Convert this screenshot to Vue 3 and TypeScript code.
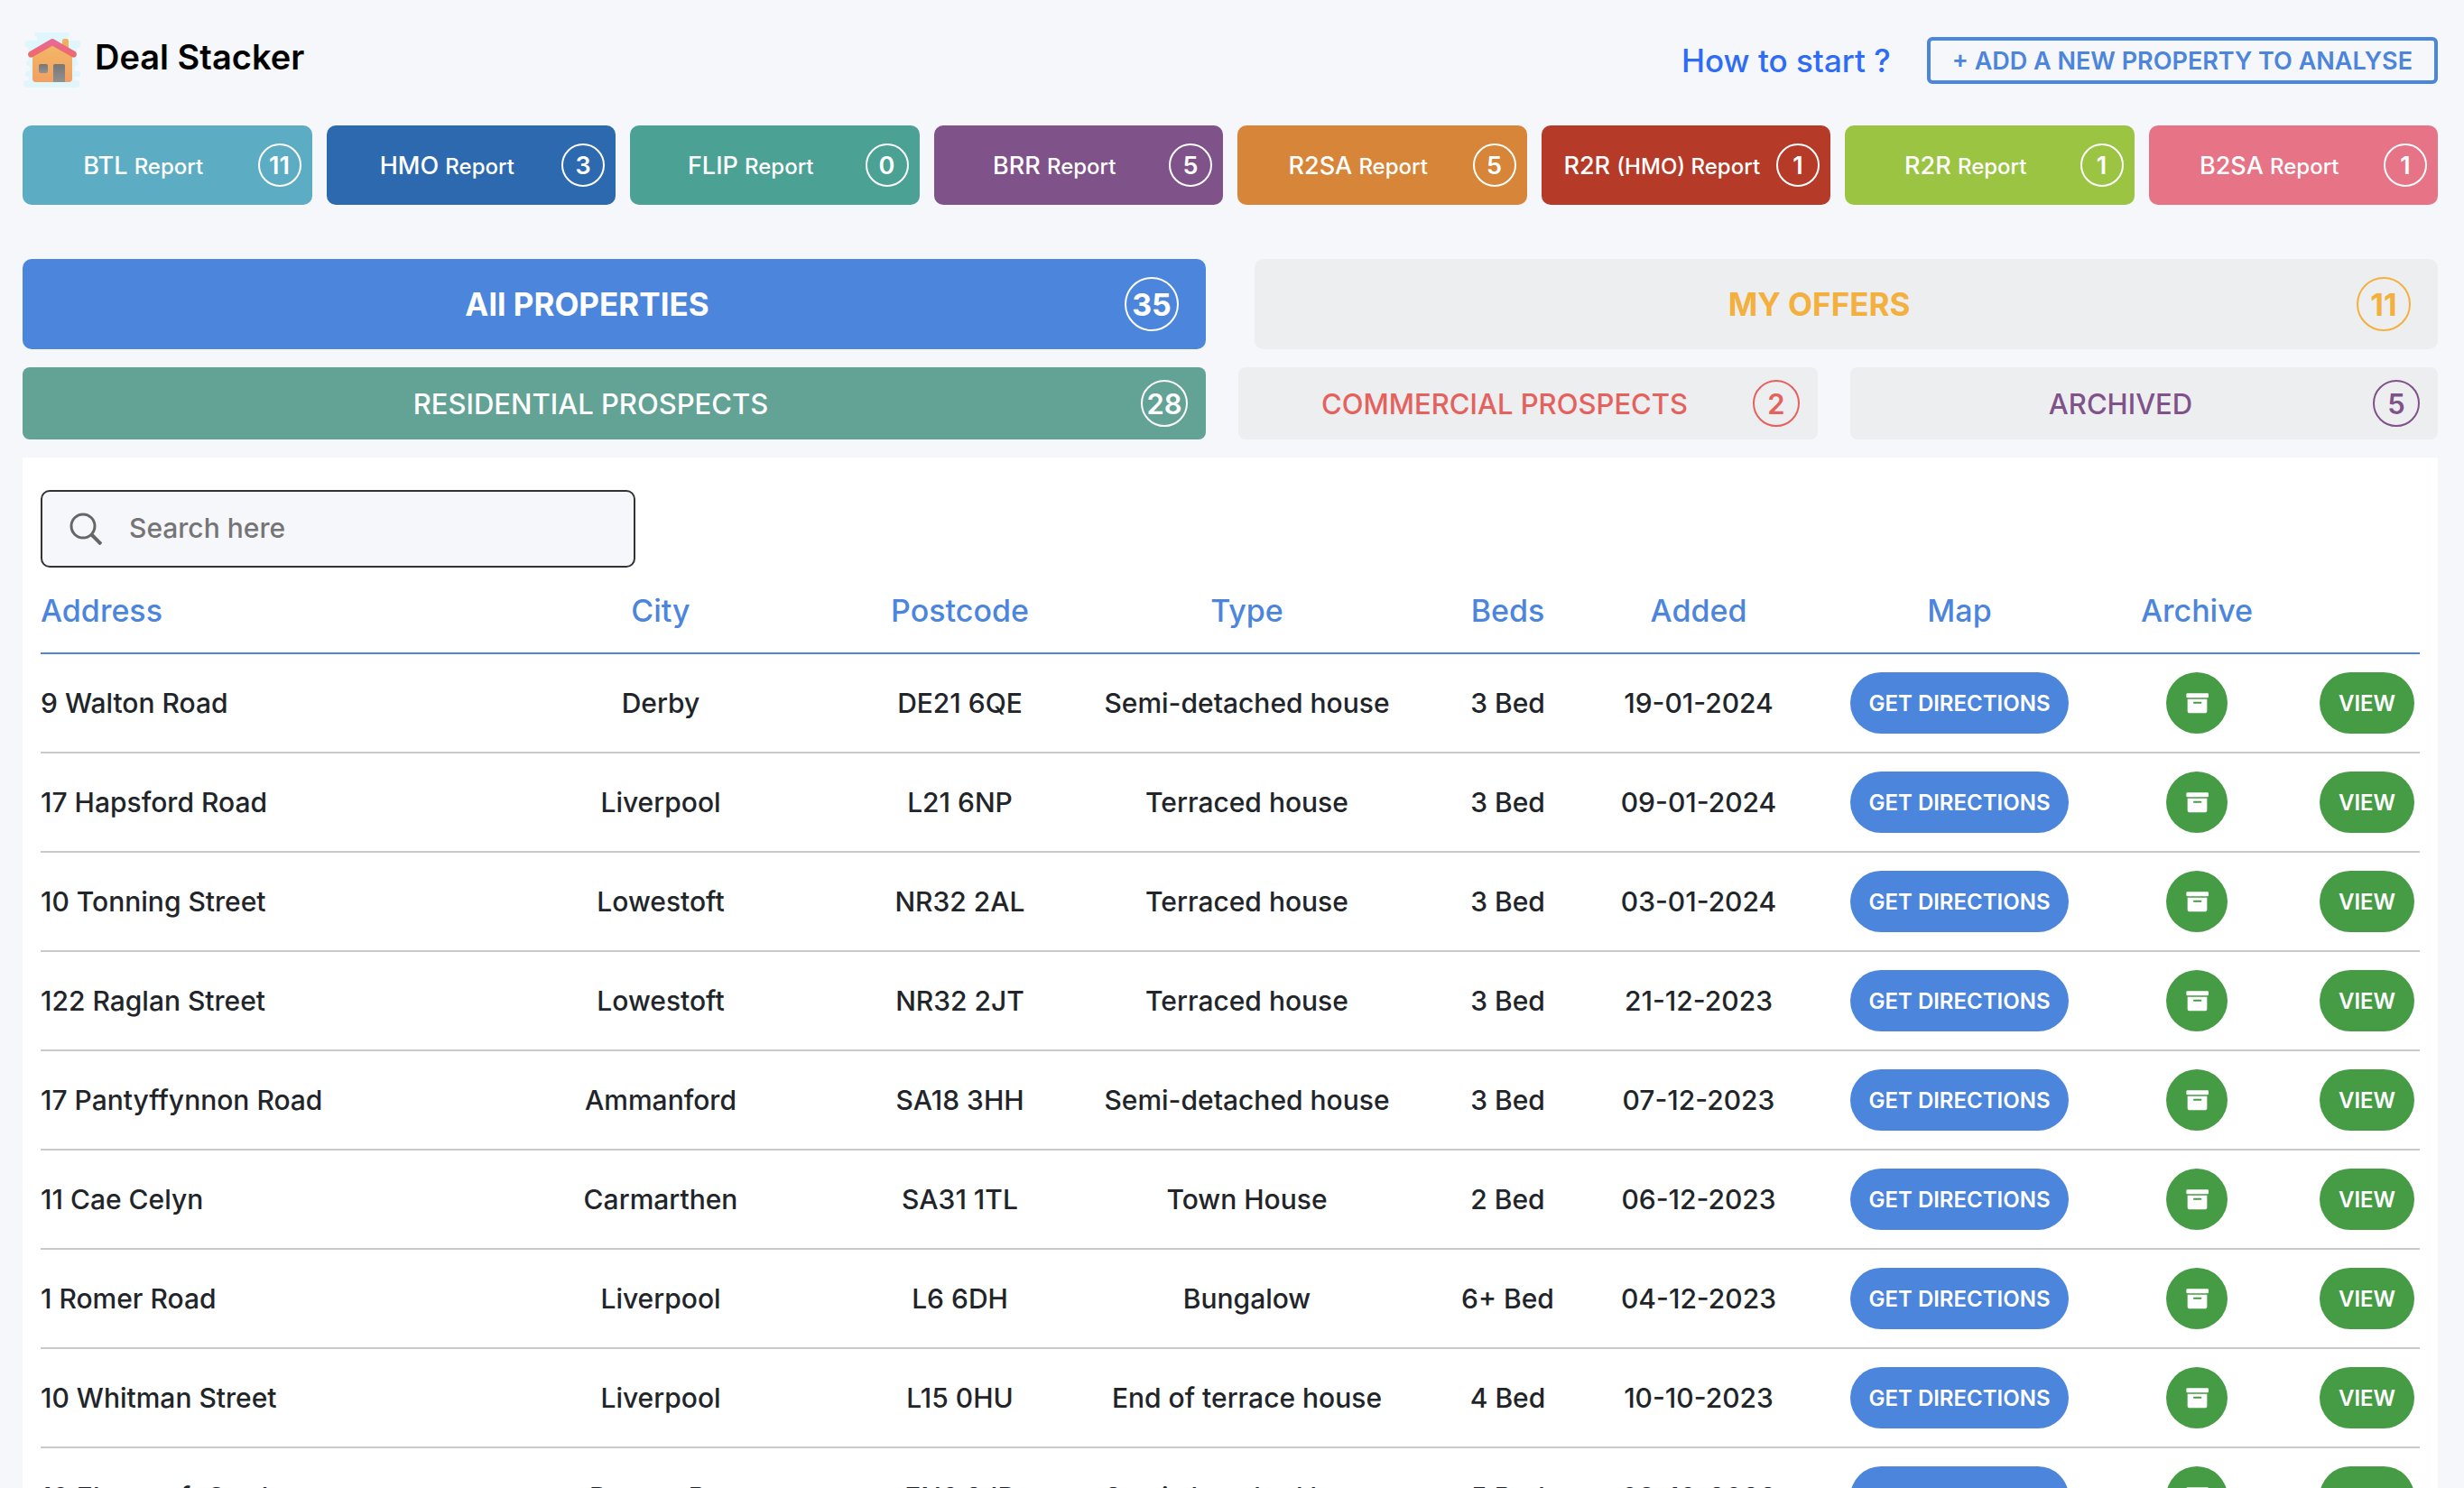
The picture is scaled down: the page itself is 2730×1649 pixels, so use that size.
<script setup lang="ts">
import { computed, ref } from 'vue'

interface Report {
  code: string
  label: string
  count: number
  tone: string
}

interface Property {
  address: string
  city: string
  postcode: string
  type: string
  beds: string
  added: string
}

const reports: Report[] = [
  { code: 'BTL', label: 'Report', count: 11, tone: 'teal' },
  { code: 'HMO', label: 'Report', count: 3, tone: 'blue' },
  { code: 'FLIP', label: 'Report', count: 0, tone: 'green' },
  { code: 'BRR', label: 'Report', count: 5, tone: 'purple' },
  { code: 'R2SA', label: 'Report', count: 5, tone: 'orange' },
  { code: 'R2R', label: '(HMO) Report', count: 1, tone: 'red' },
  { code: 'R2R', label: 'Report', count: 1, tone: 'lime' },
  { code: 'B2SA', label: 'Report', count: 1, tone: 'pink' },
]

const properties: Property[] = [
  { address: '9 Walton Road', city: 'Derby', postcode: 'DE21 6QE', type: 'Semi-detached house', beds: '3 Bed', added: '19-01-2024' },
  { address: '17 Hapsford Road', city: 'Liverpool', postcode: 'L21 6NP', type: 'Terraced house', beds: '3 Bed', added: '09-01-2024' },
  { address: '10 Tonning Street', city: 'Lowestoft', postcode: 'NR32 2AL', type: 'Terraced house', beds: '3 Bed', added: '03-01-2024' },
  { address: '122 Raglan Street', city: 'Lowestoft', postcode: 'NR32 2JT', type: 'Terraced house', beds: '3 Bed', added: '21-12-2023' },
  { address: '17 Pantyffynnon Road', city: 'Ammanford', postcode: 'SA18 3HH', type: 'Semi-detached house', beds: '3 Bed', added: '07-12-2023' },
  { address: '11 Cae Celyn', city: 'Carmarthen', postcode: 'SA31 1TL', type: 'Town House', beds: '2 Bed', added: '06-12-2023' },
  { address: '1 Romer Road', city: 'Liverpool', postcode: 'L6 6DH', type: 'Bungalow', beds: '6+ Bed', added: '04-12-2023' },
  { address: '10 Whitman Street', city: 'Liverpool', postcode: 'L15 0HU', type: 'End of terrace house', beds: '4 Bed', added: '10-10-2023' },
  { address: '10 Elmscroft Gardens', city: 'Potters Bar', postcode: 'EN6 2JP', type: 'Semi-detached house', beds: '5 Bed', added: '09-10-2023' },
]

const query = ref('')
const visible = computed(() =>
  properties.filter((p) => p.address.toLowerCase().includes(query.value.toLowerCase())),
)
</script>

<template>
  <div class="page">
    <header class="top">
      <div class="brand">
        <svg class="logo" viewBox="12 15 192 192" aria-hidden="true">
          <defs>
            <linearGradient id="roof" x1="0" y1="0" x2="0" y2="1">
              <stop offset="0" stop-color="#e8689a" />
              <stop offset="1" stop-color="#ee6b66" />
            </linearGradient>
            <linearGradient id="wall" x1="0" y1="0" x2="0" y2="1">
              <stop offset="0" stop-color="#f2b866" />
              <stop offset="1" stop-color="#f2a062" />
            </linearGradient>
            <linearGradient id="door" x1="0" y1="0" x2="0" y2="1">
              <stop offset="0" stop-color="#767676" />
              <stop offset="1" stop-color="#929292" />
            </linearGradient>
          </defs>
          <g fill="#dff6fd">
            <rect x="52" y="18" width="116" height="14" rx="7" />
            <rect x="60" y="28" width="100" height="20" />
            <rect x="20" y="45" width="185" height="24" rx="11" />
            <rect x="32" y="64" width="160" height="56" rx="8" />
            <rect x="24" y="112" width="173" height="16" rx="8" />
            <rect x="36" y="124" width="150" height="24" />
            <rect x="22" y="146" width="185" height="19" rx="9" />
            <rect x="34" y="160" width="150" height="22" />
            <rect x="15" y="177" width="187" height="24" rx="11" />
          </g>
          <rect x="144" y="39" width="21" height="50" rx="6" fill="#f2b05f" />
          <path d="M45 95 L111 58 L177 95 V172 Q177 183 166 183 H56 Q45 183 45 172 Z" fill="url(#wall)" />
          <path d="M103 42 Q111 36 119 42 L188 82 Q194 87 191 95 Q186 104 177 100 L111 62 L45 100 Q35 104 31 95 Q28 87 35 82 Z" fill="url(#roof)" />
          <rect x="66" y="123" width="30" height="30" rx="6" fill="url(#door)" />
          <path d="M114 128 Q114 123 119 123 H148 Q153 123 153 128 V183 H114 Z" fill="url(#door)" />
        </svg>
        <h1 class="title">Deal Stacker</h1>
      </div>
      <div class="actions">
        <a class="help" href="#help">How to start ?</a>
        <button class="add" type="button">+ ADD A NEW PROPERTY TO ANALYSE</button>
      </div>
    </header>

    <nav class="reports">
      <button v-for="r in reports" :key="r.code + r.label" type="button" class="report" :class="r.tone">
        <span class="report-name">{{ r.code }} <small>{{ r.label }}</small></span>
        <span class="count">{{ r.count }}</span>
      </button>
    </nav>

    <nav class="tabs primary">
      <button type="button" class="tab active">
        <span class="tab-name">All PROPERTIES</span><span class="count">35</span>
      </button>
      <button type="button" class="tab offers">
        <span class="tab-name">MY OFFERS</span><span class="count">11</span>
      </button>
    </nav>

    <nav class="tabs secondary">
      <button type="button" class="tab residential">
        <span class="tab-name">RESIDENTIAL PROSPECTS</span><span class="count">28</span>
      </button>
      <button type="button" class="tab commercial">
        <span class="tab-name">COMMERCIAL PROSPECTS</span><span class="count">2</span>
      </button>
      <button type="button" class="tab archived">
        <span class="tab-name">ARCHIVED</span><span class="count">5</span>
      </button>
    </nav>

    <main class="panel">
      <label class="search">
        <svg class="search-icon" viewBox="0 0 36 36" fill="none" stroke="#666" stroke-width="3" aria-hidden="true">
          <circle cx="15" cy="15" r="13" />
          <path d="M24 24 L35 35" stroke-width="4" />
        </svg>
        <input v-model="query" type="text" placeholder="Search here" aria-label="Search here" />
      </label>

      <table class="list">
        <colgroup>
          <col class="c-address" />
          <col class="c-city" />
          <col class="c-postcode" />
          <col class="c-type" />
          <col class="c-beds" />
          <col class="c-added" />
          <col class="c-map" />
          <col class="c-archive" />
          <col class="c-view" />
        </colgroup>
        <thead>
          <tr>
            <th>Address</th>
            <th>City</th>
            <th>Postcode</th>
            <th>Type</th>
            <th>Beds</th>
            <th>Added</th>
            <th>Map</th>
            <th>Archive</th>
            <th></th>
          </tr>
        </thead>
        <tbody>
          <tr v-for="p in visible" :key="p.address">
            <td>{{ p.address }}</td>
            <td>{{ p.city }}</td>
            <td>{{ p.postcode }}</td>
            <td>{{ p.type }}</td>
            <td>{{ p.beds }}</td>
            <td>{{ p.added }}</td>
            <td><button type="button" class="pill directions">GET DIRECTIONS</button></td>
            <td>
              <button type="button" class="pill archive" aria-label="Archive">
                <svg viewBox="125 110 75 75" fill="#fff" aria-hidden="true">
                  <rect x="126" y="114" width="74" height="15" rx="4" />
                  <path
                    fill-rule="evenodd"
                    d="M130 133 H195 V172 Q195 180 187 180 H138 Q130 180 130 172 Z M152 142 Q149 142 149 145 Q149 148 152 148 H174 Q177 148 177 145 Q177 142 174 142 Z"
                  />
                </svg>
              </button>
            </td>
            <td><button type="button" class="pill view">VIEW</button></td>
          </tr>
        </tbody>
      </table>
    </main>
  </div>
</template>

<style>
html,
body {
  height: 100%;
  overflow: hidden;
  background: #f5f7fb;
}
</style>

<style scoped>
.page {
  box-sizing: border-box;
  height: 100vh;
  overflow: hidden;
  padding: 0 29px 0 25px;
  background: #f5f7fb;
  color: #212529;
  font-family: Inter, 'Liberation Sans', sans-serif;
  font-size: 30px;
  font-weight: 450;
}

button {
  margin: 0;
  padding: 0;
  border: 0;
  font-family: inherit;
  font-weight: inherit;
  cursor: pointer;
}

.top {
  display: flex;
  justify-content: space-between;
  align-items: flex-start;
  height: 139px;
}

.brand {
  display: flex;
  gap: 16px;
  padding-top: 35px;
}

.logo {
  width: 64px;
  height: 64px;
}

.title {
  margin: 0;
  color: #000;
  font-size: 38px;
  font-weight: 600;
  line-height: 56px;
}

.actions {
  display: flex;
  align-items: center;
  gap: 40px;
  padding-top: 41px;
}

.help {
  color: #2e6bf6;
  font-size: 35px;
  line-height: 52px;
  text-decoration: none;
}

.add {
  height: 52px;
  padding: 0 24px;
  border: 4px solid #4c85dc;
  border-radius: 6px;
  background: transparent;
  color: #4c85dc;
  font-size: 27px;
  font-weight: 600;
}

.reports {
  display: flex;
  gap: 16px;
}

.report {
  display: flex;
  flex: 1 1 0;
  align-items: center;
  min-width: 0;
  height: 88px;
  padding: 0 12px 0 7px;
  border-radius: 10px;
  color: #fff;
}

.report-name {
  flex: 1;
  font-size: 27px;
  font-weight: 500;
  text-align: center;
  white-space: nowrap;
}

.report-name small {
  font-size: 24px;
}

.count {
  display: flex;
  box-sizing: border-box;
  flex: none;
  align-items: center;
  justify-content: center;
  border: 2px solid currentColor;
  border-radius: 50%;
}

.report .count {
  width: 48px;
  height: 48px;
  font-size: 27px;
  font-weight: 600;
}

.teal { background: #5cadc3; }
.blue { background: #2c69af; }
.green { background: #4aa194; }
.purple { background: #80528a; }
.orange { background: #d78539; }
.red { background: #b53a27; }
.lime { background: #9ac442; }
.pink { background: #e67386; }

.tabs {
  display: grid;
}

.tab {
  display: flex;
  align-items: center;
  min-width: 0;
  background: #edeef0;
}

.tab-name {
  flex: 1;
  text-align: center;
  white-space: nowrap;
}

.primary {
  grid-template-columns: 1fr 1fr;
  gap: 54px;
  margin-top: 60px;
}

.primary .tab {
  height: 100px;
  padding: 0 30px;
  border-radius: 10px;
  font-size: 35px;
  font-weight: 650;
}

.primary .count {
  width: 60px;
  height: 60px;
  font-size: 34px;
  font-weight: 700;
}

.secondary {
  grid-template-columns: 1311fr 642fr 651fr;
  gap: 36px;
  margin-top: 20px;
}

.secondary .tab {
  height: 80px;
  padding: 0 20px;
  border-radius: 8px;
  font-size: 31px;
}

.secondary .count {
  width: 52px;
  height: 52px;
  font-weight: 600;
}

.primary .active {
  background: #4c85dc;
  color: #fff;
}

.offers {
  color: #f3b03f;
}

.secondary .residential {
  background: #62a395;
  color: #fff;
}

.commercial {
  color: #e5615d;
}

.archived {
  color: #80528a;
}

.panel {
  margin-top: 20px;
  padding: 36px 20px 0;
  background: #fff;
}

.search {
  display: flex;
  box-sizing: border-box;
  align-items: center;
  gap: 30px;
  width: 25%;
  height: 86px;
  padding: 0 30px;
  border: 2px solid #333;
  border-radius: 10px;
  background: #f5f7fb;
}

.search-icon {
  flex: none;
  width: 36px;
  height: 36px;
}

.search input {
  flex: 1;
  min-width: 0;
  padding: 0 0 2px;
  border: 0;
  outline: 0;
  background: transparent;
  color: #212529;
  font-family: inherit;
  font-size: 30px;
  font-weight: inherit;
}

.search input::placeholder {
  color: #757575;
}

.list {
  width: 100%;
  border-collapse: separate;
  border-spacing: 0;
  table-layout: fixed;
}

.c-address { width: 440px; }
.c-city { width: 494px; }
.c-postcode { width: 169px; }
.c-type { width: 467px; }
.c-beds { width: 111px; }
.c-added { width: 312px; }
.c-map { width: 266px; }
.c-archive { width: 260px; }
.c-view { width: 117px; }

th,
td {
  box-sizing: border-box;
  padding: 0;
  text-align: center;
  vertical-align: middle;
  white-space: nowrap;
}

th:first-child,
td:first-child {
  text-align: left;
}

th {
  height: 96px;
  border-bottom: 2px solid #4c85dc;
  color: #4c85dc;
  font-size: 34px;
  font-weight: 500;
}

td {
  height: 110px;
  border-bottom: 2px solid #c9c9c9;
}

.pill {
  display: inline-flex;
  align-items: center;
  justify-content: center;
  height: 68px;
  border-radius: 34px;
  background: #469b45;
  color: #fff;
  font-size: 24px;
  font-weight: 600;
  vertical-align: middle;
}

.directions {
  width: 242px;
  background: #4c85dc;
}

.archive {
  width: 68px;
}

.archive svg {
  width: 25px;
  height: 25px;
}

.view {
  width: 105px;
}
</style>
